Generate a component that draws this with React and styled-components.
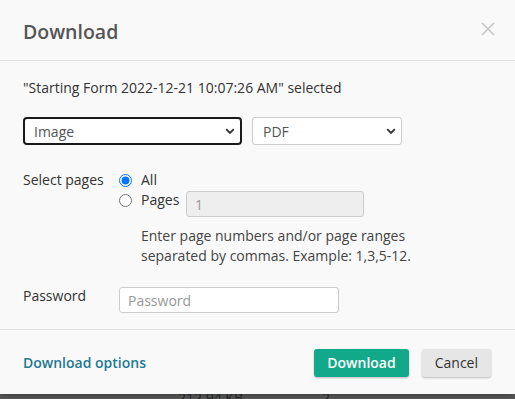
import React from 'react';
import styled, { createGlobalStyle } from 'styled-components';

const Global = createGlobalStyle`
  html, body {
    margin: 0;
    padding: 0;
    background: #5a5a5a;
  }
  body {
    font-family: "Open Sans", "Noto Sans", sans-serif;
    font-size: 14px;
    color: #333;
  }
`;

const Page = styled.div`
  width: 515px;
  height: 399px;
  overflow: hidden;
  display: flex;
  flex-direction: column;
`;

const Modal = styled.div`
  background: #f9f9f9;
  height: 394px;
  flex-shrink: 0;
  display: flex;
  flex-direction: column;
  box-shadow: 0 2px 6px rgba(0, 0, 0, 0.3);
  position: relative;
  z-index: 1;
`;

const Header = styled.div`
  display: flex;
  align-items: center;
  justify-content: space-between;
  height: 61px;
  padding: 2px 20px 0 23px;
  box-sizing: border-box;
  border-bottom: 1px solid #e0e0e0;
`;

const Title = styled.h2`
  margin: 0;
  font-size: 19.5px;
  font-weight: 600;
  color: #555;
`;

const Close = styled.button`
  border: 0;
  background: none;
  padding: 0;
  width: 14px;
  height: 14px;
  display: flex;
  margin-top: -4px;
`;

const Body = styled.div`
  padding: 17px 23px 16px;
  border-bottom: 1px solid #e0e0e0;
`;

const Line = styled.div`
  line-height: 20px;
  color: #333;
`;

const Selects = styled.div`
  display: flex;
  gap: 10px;
  margin-top: 19px;
`;

const SelectBox = styled.div`
  width: ${p => p.w}px;
  height: 28px;
  box-sizing: border-box;
  display: flex;
  align-items: center;
  justify-content: space-between;
  padding: 0 5px 0 ${p => p.focused ? 9 : 10}px;
  background: #fff;
  border: ${p => p.focused ? '2px solid #1a1a1a' : '1px solid #ccc'};
  border-radius: ${p => p.focused ? 4 : 3}px;
  color: #555;
`;

const FormRow = styled.div`
  display: grid;
  grid-template-columns: 96px 1fr;
  margin-top: ${p => p.mt}px;
`;

const Label = styled.div`
  line-height: 20px;
  color: #333;
`;

const Options = styled.div`
  display: flex;
  flex-direction: column;
`;

const RadioLine = styled.label`
  display: flex;
  align-items: flex-start;
  line-height: 20px;
  margin-top: ${p => p.mt || 0}px;
`;

const Radio = styled.input`
  margin: 4px 9px 0 0;
  width: 13px;
  height: 13px;
  accent-color: #0075ff;
`;

const RadioText = styled.span`
  width: 45px;
`;

const TextInput = styled.input`
  width: ${p => p.w}px;
  height: 26px;
  box-sizing: border-box;
  margin-top: 1px;
  border: 1px solid #ccc;
  border-radius: 3px;
  padding: 0 8px;
  font: inherit;
  font-size: 14px;
  background: ${p => p.disabled ? '#eee' : '#fff'};
  color: #999;
  &::placeholder { color: #999; }
`;

const Help = styled.div`
  margin: 9px 0 0 22px;
  line-height: 20px;
  color: #444;
`;

const Footer = styled.div`
  flex: 1;
  display: flex;
  align-items: center;
  justify-content: space-between;
  padding: 1px 24px 0 23px;
`;

const Link = styled.a`
  color: #1e7a91;
  font-weight: 600;
  text-decoration: none;
`;

const Buttons = styled.div`
  display: flex;
  gap: 13px;
`;

const Button = styled.button`
  height: 28px;
  padding: 0 13px;
  border: 0;
  border-radius: 3px;
  font: inherit;
  font-size: 14px;
  font-weight: ${p => p.primary ? 600 : 400};
  background: ${p => p.primary ? '#11a98a' : '#e6e6e6'};
  color: ${p => p.primary ? '#fff' : '#333'};
  box-shadow: 0 1px 2px rgba(0, 0, 0, 0.25);
`;

const Behind = styled.div`
  position: relative;
  height: 20px;
  color: #2a2a2a;
  font-size: 14px;
  margin-top: -6px;
`;

const BehindText = styled.span`
  position: absolute;
  left: ${p => p.x}px;
  top: 0;
`;

const Chevron = () => (
  <svg width="10" height="7" viewBox="0 0 10 7">
    <path d="M1.2 1.2 L5 5 L8.8 1.2" fill="none" stroke="#333" strokeWidth="1.8" />
  </svg>
);

export default function App() {
  return (
    <Page>
      <Global />
      <Modal>
        <Header>
          <Title>Download</Title>
          <Close aria-label="Close">
            <svg width="14" height="14" viewBox="0 0 14 14">
              <path d="M1 1 L13 13 M13 1 L1 13" stroke="#c8c8c8" strokeWidth="1.6" />
            </svg>
          </Close>
        </Header>
        <Body>
          <Line>"Starting Form 2022-12-21 10:07:26 AM" selected</Line>
          <Selects>
            <SelectBox w={219} focused>Image<Chevron /></SelectBox>
            <SelectBox w={150}>PDF<Chevron /></SelectBox>
          </Selects>
          <FormRow mt={25}>
            <Label>Select pages</Label>
            <Options>
              <RadioLine>
                <Radio type="radio" name="pages" defaultChecked />
                <RadioText>All</RadioText>
              </RadioLine>
              <RadioLine mt={0}>
                <Radio type="radio" name="pages" />
                <RadioText>Pages</RadioText>
                <TextInput w={178} disabled defaultValue="1" />
              </RadioLine>
              <Help>
                Enter page numbers and/or page ranges<br />
                separated by commas. Example: 1,3,5-12.
              </Help>
            </Options>
          </FormRow>
          <FormRow mt={20}>
            <Label>Password</Label>
            <TextInput w={220} placeholder="Password" />
          </FormRow>
        </Body>
        <Footer>
          <Link href="#">Download options</Link>
          <Buttons>
            <Button primary>Download</Button>
            <Button>Cancel</Button>
          </Buttons>
        </Footer>
      </Modal>
      <Behind>
        <BehindText x={178}>212.94 KB</BehindText>
        <BehindText x={322}>2</BehindText>
      </Behind>
    </Page>
  );
}
